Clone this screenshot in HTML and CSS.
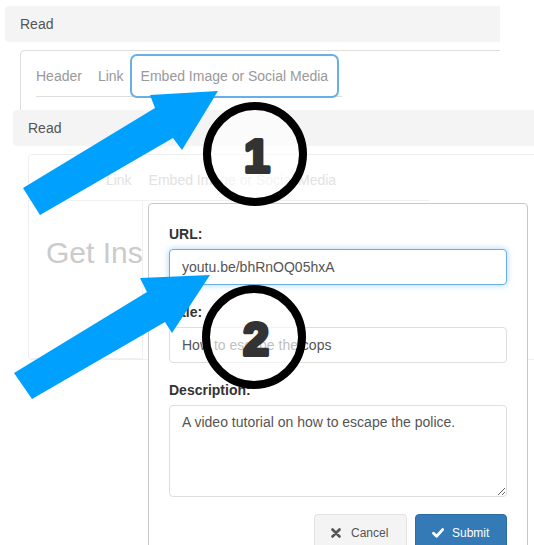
FILE: index.html
```html
<!DOCTYPE html>
<html lang="en">
<head>
<meta charset="utf-8">
<title>Embed steps</title>
<link rel="stylesheet" href="styles.css">
</head>
<body>
<div class="canvas">
  <section class="shot shot-1">
    <div class="read-bar">Read</div>
    <div class="card">
      <nav class="tabs">
        <span class="tab tab-first">Header</span>
        <span class="tab">Link</span>
        <span class="tab tab-focus">Embed Image or Social Media</span>
      </nav>
    </div>
  </section>

  <section class="shot shot-2">
    <div class="read-bar">Read</div>
    <div class="card card-faded">
      <nav class="tabs tabs-faded">
        <span class="tab tab-first">Header</span>
        <span class="tab">Link</span>
        <span class="tab tab-wide">Embed Image or Social Media</span>
      </nav>
      <div class="card-body">
        <div class="col-clip"><h2 class="inspire">Get Inspired</h2></div>
      </div>
    </div>

    <form class="modal">
      <div class="form-group">
        <label class="label">URL:</label>
        <input class="field field-focus" type="text" value="youtu.be/bhRnOQ05hxA">
      </div>
      <div class="form-group">
        <label class="label">Title:</label>
        <input class="field" type="text" value="How to escape the cops">
      </div>
      <div class="form-group">
        <label class="label">Description:</label>
        <textarea class="field area">A video tutorial on how to escape the police.</textarea>
      </div>
      <div class="actions">
        <button type="button" class="btn btn-cancel">
          <svg class="ico ico-x" viewBox="0 0 10 10" width="10" height="10"><path d="M1.5 1.5 L8.5 8.5 M8.5 1.5 L1.5 8.5"/></svg>
          <span>Cancel</span>
        </button>
        <button type="button" class="btn btn-submit">
          <svg class="ico ico-check" viewBox="0 0 12 10" width="12" height="10"><path d="M1.5 5.2 L4.6 8.2 L10.6 1.6"/></svg>
          <span>Submit</span>
        </button>
      </div>
    </form>
  </section>

  <svg class="annot" width="534" height="545" viewBox="0 0 534 545">
    <polygon class="arrow" points="23,188 155,108 150,95 218,91 182,150 173,138 40,215"/>
    <circle class="ring" cx="255" cy="154" r="48"/>
    <text class="num" x="257" y="171.5" text-anchor="middle">1</text>
    <polygon class="arrow" points="14,373 147,292 140,278 210,275 172,333 165,322 32,399"/>
    <circle class="ring" cx="254" cy="337" r="48"/>
    <text class="num" x="256" y="355" text-anchor="middle">2</text>
  </svg>
</div>
</body>
</html>
```
FILE: styles.css
```css
* { box-sizing: border-box; }

html, body {
  margin: 0;
  padding: 0;
  background: #fff;
}

body {
  width: 534px;
  height: 545px;
  overflow: hidden;
  font-family: "Liberation Sans", Arial, sans-serif;
  font-size: 14px;
  color: #555;
}

.canvas {
  position: relative;
  width: 534px;
  height: 545px;
  overflow: hidden;
}

/* the two stacked screenshots */
.shot {
  position: absolute;
  background: #fff;
  overflow: hidden;
}

.shot-1 {
  left: 5px;
  top: 6px;
  width: 495px;
  height: 110px;
}

.shot-2 {
  left: 13px;
  top: 110px;
  width: 540px;
  height: 450px;
}

.read-bar {
  width: 580px;
  height: 36px;
  line-height: 36px;
  padding: 0 15px;
  background: #f4f4f4;
  border-radius: 4px;
  color: #555;
}

.card {
  width: 580px;
  height: 220px;
  margin: 8px 0 0 15px;
  padding-top: 5px;
  border: 1px solid #ddd;
  border-radius: 4px;
}

.tabs {
  display: flex;
  width: 306px;
  margin-left: 15px;
  border-bottom: 1px solid #ddd;
}

.tab {
  padding: 12px 8px;
  line-height: 16px;
  color: #999;
  white-space: nowrap;
}

.tab-first { padding-left: 0; }

.tab-focus {
  padding: 12px 9px;
  outline: 2px solid #6aaee8;
  border-radius: 5px;
}

.tab-wide { padding: 12px 9px; }

/* faded second screenshot behind the modal */
.card-faded {
  height: 206px;
  border-color: #eee;
}

.tabs-faded {
  width: 400px;
  margin-left: 0;
  padding-left: 15px;
  border-bottom-color: #f0f0f0;
}

.tabs-faded .tab { color: #e2e2e2; }

.card-body { display: flex; }

.col-clip {
  width: 114px;
  height: 158px;
  overflow: hidden;
  padding: 35px 0 0 17px;
  border-right: 1px solid #f0f0f0;
  border-bottom: 1px solid #f0f0f0;
}

.inspire {
  margin: 0;
  font-size: 30px;
  line-height: 34px;
  font-weight: normal;
  color: #cbcbcb;
  white-space: nowrap;
}

/* modal form */
.modal {
  position: absolute;
  left: 135px;
  top: 93px;
  width: 380px;
  height: 400px;
  margin: 0;
  padding: 20px 20px 0;
  background: #fff;
  border: 1px solid #c8c8c8;
  border-radius: 4px;
}

.form-group {
  display: flex;
  flex-direction: column;
  margin-bottom: 17px;
}

.label {
  display: block;
  margin-bottom: 5px;
  line-height: 20px;
  font-weight: bold;
  color: #333;
}

.field {
  width: 338px;
  height: 36px;
  padding: 0 12px;
  border: 1px solid #dedede;
  border-radius: 4px;
  font-family: "Liberation Sans", Arial, sans-serif;
  font-size: 14px;
  color: #555;
  background: #fff;
}

.field-focus {
  border-color: #66afe9;
  box-shadow: 0 0 6px rgba(102, 175, 233, 0.55);
  outline: none;
}

.area {
  height: 92px;
  padding: 6px 12px;
  line-height: 20px;
  resize: both;
}

.actions {
  display: flex;
  justify-content: flex-end;
  gap: 8px;
  width: 338px;
}

.btn {
  display: inline-flex;
  align-items: center;
  height: 37px;
  padding: 0 0 0 16px;
  border-radius: 4px;
  font-family: "Liberation Sans", Arial, sans-serif;
  font-size: 12px;
}

.btn-cancel {
  width: 93px;
  gap: 10px;
  background: #f4f4f4;
  border: 1px solid #e2e2e2;
  color: #555;
}

.btn-submit {
  width: 92px;
  gap: 8px;
  padding-left: 16px;
  background: #337ab7;
  border: 1px solid #2e6da4;
  color: #fff;
}

.ico { flex: none; fill: none; stroke-linecap: round; stroke-linejoin: round; }
.ico-x { stroke: #555; stroke-width: 2.6; }
.ico-check { stroke: #fff; stroke-width: 2.8; }

/* annotation layer */
.annot {
  position: absolute;
  left: 0;
  top: 0;
  pointer-events: none;
}

.arrow { fill: #00a0ff; }

.ring {
  fill: rgba(255, 255, 255, 0.62);
  stroke: #000;
  stroke-width: 8;
}

.num {
  font-family: "Liberation Sans", Arial, sans-serif;
  font-weight: bold;
  font-size: 46px;
  fill: #333;
  stroke: #333;
  stroke-width: 4;
  stroke-linejoin: round;
}
```
